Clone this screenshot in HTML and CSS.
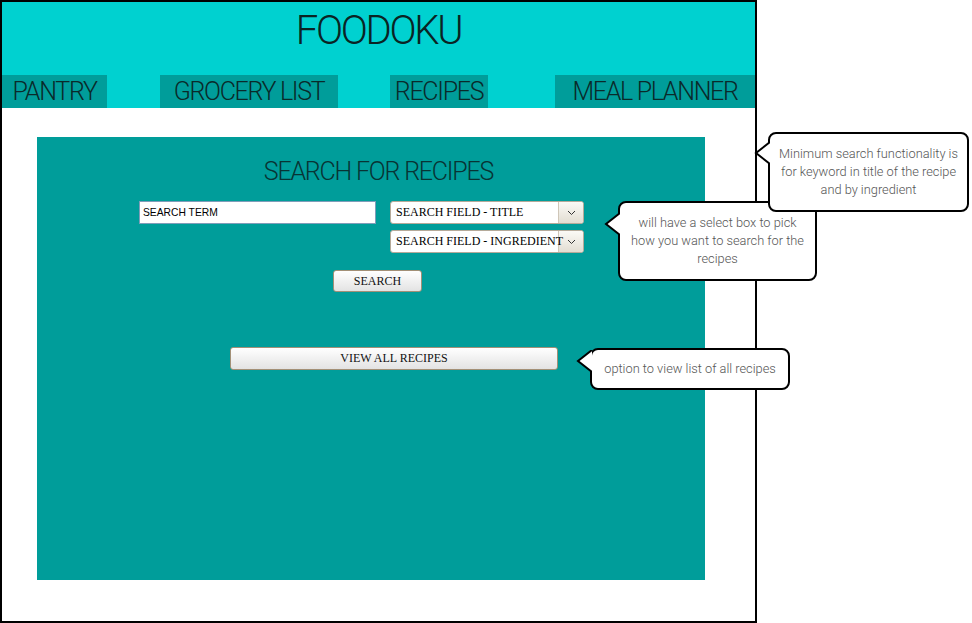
FILE: index.html
```html
<!DOCTYPE html>
<html>
<head>
<title>Foodoku - Recipes</title>
<meta name="viewport" content="width=device-width, initial-scale=1.0">
<link rel="stylesheet" href="styles.css">
</head>
<body>
<div class="page">

  <div class="app">
    <header class="masthead">
      <h1 class="brand">FOODOKU</h1>
      <nav class="tabs">
        <a class="tab tab-pantry">PANTRY</a>
        <a class="tab tab-grocery">GROCERY LIST</a>
        <a class="tab tab-recipes">RECIPES</a>
        <a class="tab tab-planner">MEAL PLANNER</a>
      </nav>
    </header>

    <main class="panel">
      <h2 class="panel-title">SEARCH FOR RECIPES</h2>

      <div class="search-row">
        <input class="search-term" type="text" value="SEARCH TERM">
        <div class="field-picks">
          <div class="picker">
            <span class="picker-value">SEARCH FIELD - TITLE</span>
            <span class="picker-arrow">
              <svg width="9" height="6" viewBox="0 0 9 6"><path d="M1 1 L4.5 4.5 L8 1" fill="none" stroke="#333" stroke-width="1"/></svg>
            </span>
          </div>
          <div class="picker">
            <span class="picker-value">SEARCH FIELD - INGREDIENT</span>
            <span class="picker-arrow">
              <svg width="9" height="6" viewBox="0 0 9 6"><path d="M1 1 L4.5 4.5 L8 1" fill="none" stroke="#333" stroke-width="1"/></svg>
            </span>
          </div>
        </div>
      </div>

      <div class="search-action">
        <button class="btn btn-search">SEARCH</button>
      </div>

      <div class="view-all-row">
        <button class="btn btn-view-all">VIEW ALL RECIPES</button>
      </div>
    </main>
  </div>

  <!-- wireframe notes -->
  <div class="note note-select">
    <svg class="tail" width="16" height="22" viewBox="0 0 16 22"><path d="M16 0 L2 11 L16 22 Z" fill="#fff"/><path d="M16 0 L2 11 L16 22" fill="none" stroke="#000" stroke-width="2"/></svg>
    will have a select box to pick<br>how you want to search for the<br>recipes
  </div>
  <div class="note note-view">
    <svg class="tail" width="16" height="22" viewBox="0 0 16 22"><path d="M16 0 L2 11 L16 22 Z" fill="#fff"/><path d="M16 0 L2 11 L16 22" fill="none" stroke="#000" stroke-width="2"/></svg>
    option to view list of all recipes
  </div>
  <div class="note note-min">
    <svg class="tail" width="16" height="22" viewBox="0 0 16 22"><path d="M16 0 L2 11 L16 22 Z" fill="#fff"/><path d="M16 0 L2 11 L16 22" fill="none" stroke="#000" stroke-width="2"/></svg>
    Minimum search functionality is<br>for keyword in title of the recipe<br>and by ingredient
  </div>

</div>
</body>
</html>
```

FILE: styles.css
```css
body {
  margin: 0;
  background: #fff;
  font-family: Roboto, "Liberation Sans", sans-serif;
}
.page {
  position: relative;
  width: 972px;
  height: 623px;
}
.app {
  width: 757px;
  height: 623px;
  box-sizing: border-box;
  border: 2px solid #000;
}
.masthead {
  background: #00d1d0;
  padding-top: 5px;
}
.brand {
  margin: 0;
  font-size: 40px;
  font-weight: 300;
  line-height: 47px;
  letter-spacing: -2.3px;
  text-align: center;
  color: #0a2424;
}
.tabs {
  display: flex;
  margin-top: 21px;
  height: 33px;
}
.tab {
  display: block;
  background: #009d9a;
  font-size: 25px;
  font-weight: 300;
  line-height: 33px;
  letter-spacing: -1.3px;
  text-align: center;
  color: #0a2a2a;
  white-space: nowrap;
}
.tab-pantry { width: 105px; }
.tab-grocery { width: 178px; margin-left: 53px; }
.tab-recipes { width: 98px; margin-left: 52px; }
.tab-planner { width: 200px; margin-left: 67px; }

.panel {
  margin: 29px 0 0 35px;
  width: 668px;
  height: 443px;
  box-sizing: border-box;
  padding-top: 20px;
  background: #009d9a;
}
.panel-title {
  margin: 0;
  padding-left: 15px;
  font-size: 25px;
  font-weight: 300;
  line-height: 30px;
  letter-spacing: -1.2px;
  text-align: center;
  color: #083434;
}
.search-row {
  display: flex;
  align-items: flex-start;
  gap: 14px;
  margin-top: 14px;
  padding-left: 102px;
}
.search-term {
  width: 237px;
  height: 23px;
  box-sizing: border-box;
  margin: 0;
  padding: 0 3px;
  border: 1px solid #7f9db9;
  background: #fff;
  font-family: "Liberation Sans", Arial, sans-serif;
  font-size: 10.3px;
  color: #000;
}
.field-picks {
  display: flex;
  flex-direction: column;
  gap: 6px;
  width: 194px;
}
.picker {
  position: relative;
  display: flex;
  height: 23px;
  box-sizing: border-box;
  border: 1px solid #b5aa9a;
  border-radius: 3px;
  background: #fff;
  overflow: hidden;
}
.picker-value {
  position: relative;
  z-index: 1;
  flex: 1;
  min-width: 0;
  padding-left: 5px;
  font-family: "Liberation Serif", serif;
  font-size: 12px;
  line-height: 21px;
  color: #000;
  white-space: nowrap;
}
.picker-arrow {
  flex: none;
  width: 24px;
  display: flex;
  align-items: center;
  justify-content: center;
  border-left: 1px solid #cfc6b8;
  background: linear-gradient(#fbfaf6, #e2ddd2);
}
.search-action {
  margin-top: 17px;
  padding-left: 296px;
}
.view-all-row {
  margin-top: 55px;
  padding-left: 193px;
}
.btn {
  display: block;
  box-sizing: border-box;
  margin: 0;
  padding: 0;
  border: 1px solid #a39077;
  border-radius: 3px;
  background: linear-gradient(#ffffff, #e3e3e3);
  font-family: "Liberation Serif", serif;
  font-size: 12px;
  color: #111;
}
.btn-search {
  width: 89px;
  height: 22px;
}
.btn-view-all {
  width: 328px;
  height: 23px;
}

.note {
  position: absolute;
  box-sizing: border-box;
  padding: 11px 2px;
  background: #fff;
  border: 2px solid #000;
  border-radius: 8px;
  font-size: 12.8px;
  font-weight: 300;
  line-height: 18px;
  color: #555;
  text-align: center;
  white-space: nowrap;
}
.tail {
  position: absolute;
  left: -16px;
}
.note-min {
  left: 768px;
  top: 132px;
  width: 201px;
}
.note-min .tail { top: 8px; }
.note-select {
  left: 618px;
  top: 201px;
  width: 199px;
}
.note-select .tail { top: 10px; }
.note-view {
  left: 590px;
  top: 348px;
  width: 200px;
  padding: 10px 2px;
}
.note-view .tail { top: 0; }
```
